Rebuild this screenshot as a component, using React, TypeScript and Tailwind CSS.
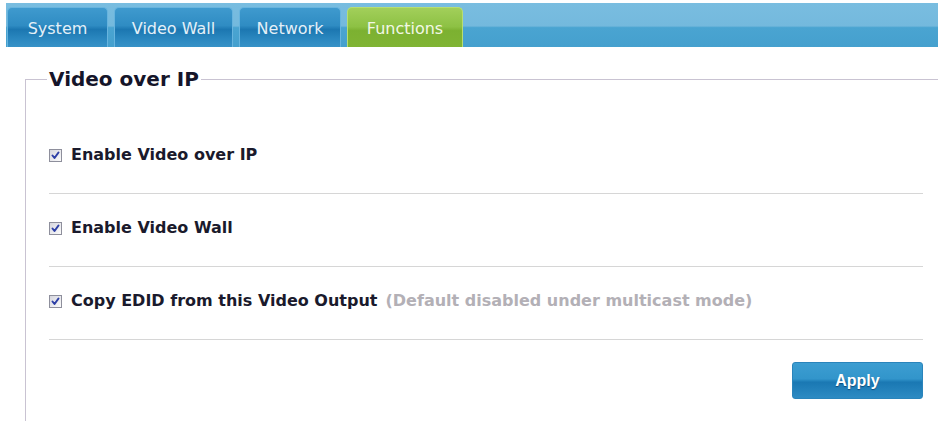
import React, { useState } from 'react';

const tabs = ['System', 'Video Wall', 'Network', 'Functions'];
const tabWidths: Record<string, string> = {
    'System': 'w-[101px]',
    'Video Wall': 'w-[119px]',
    'Network': 'w-[102px]',
    'Functions': 'w-[116px]',
};

const CheckBox: React.FC<{ checked: boolean; onToggle: () => void }> = ({ checked, onToggle }) => (
    <span onClick={onToggle}
        className="flex h-[13px] w-[13px] shrink-0 cursor-pointer items-center justify-center border border-[#8e8f9c] bg-gradient-to-br from-[#d6d6de] to-[#fbfbfb]">
        {checked && (
            <svg width="9" height="9" viewBox="0 0 9 9">
                <path d="M1.5 4.5 L3.5 7 L7.5 1.5" fill="none" stroke="#2d3fa6" strokeWidth="2" strokeLinecap="round" strokeLinejoin="round" />
            </svg>
        )}
    </span>
);

const App: React.FC = () => {
    const [active, setActive] = useState('Functions');
    const [opts, setOpts] = useState({ vip: true, wall: true, edid: true });

    const toggle = (key: keyof typeof opts) => setOpts({ ...opts, [key]: !opts[key] });

    const rows: { key: keyof typeof opts; label: string; note?: string }[] = [
        { key: 'vip', label: 'Enable Video over IP' },
        { key: 'wall', label: 'Enable Video Wall' },
        { key: 'edid', label: 'Copy EDID from this Video Output', note: '(Default disabled under multicast mode)' },
    ];

    return (
        <div className="min-h-[421px] w-full overflow-hidden bg-white pt-[3px] font-['DejaVu_Sans',Verdana,sans-serif]">
            {/* tab strip */}
            <div className="ml-[6px] flex h-[44px] items-end gap-[6px] bg-[linear-gradient(to_bottom,#79bde0_0%,#74b9dd_52%,#4aa4d1_56%,#45a0ce_100%)] pl-[1px]">
                {tabs.map(tab => {
                    const on = tab === active;
                    return (
                        <button key={tab} onClick={() => setActive(tab)}
                            className={`flex h-[40px] items-center justify-center rounded-t-[5px] border border-b-0 pt-[2px] text-[16px] ${tabWidths[tab]} ${on
                                ? 'border-[#b7de72] bg-[linear-gradient(to_bottom,#a2cf5a_0%,#8dc144_48%,#7cb131_58%,#80b434_100%)] text-[#f2f8e6]'
                                : 'border-[#67b4de] bg-[linear-gradient(to_bottom,#3f9ace_0%,#2f8cc3_45%,#1c77b1_55%,#2b88c0_80%,#3792c7_100%)] text-[#e4f0f8]'}`}>
                            {tab}
                        </button>
                    );
                })}
            </div>

            <fieldset className="mt-[20px] ml-[25px] -mr-[20px] border-l border-t border-[#c9c3d2] pl-[23px] pr-[35px]">
                <legend className="-ml-[2px] px-[2px] text-[20px] leading-[24px] font-bold text-[#15152a]">Video over IP</legend>
                <div className="pt-[30px]">
                    {rows.map(row => (
                        <div key={row.key} className="flex items-center border-b border-[#d6d6d6] pt-[24px] pb-[28px] leading-[20px]">
                            <CheckBox checked={opts[row.key]} onToggle={() => toggle(row.key)} />
                            <span className="ml-[9px] text-[16px] font-bold text-[#1a1a2c]">{row.label}</span>
                            {row.note && <span className="ml-[8px] text-[16px] font-bold text-[#b3b0b6]">{row.note}</span>}
                        </div>
                    ))}
                    <div className="flex justify-end pt-[22px] pb-[22px]">
                        <button className="h-[37px] w-[131px] rounded-[3px] border border-[#2a84bb] bg-[linear-gradient(to_bottom,#3c9dd1_0%,#3295cb_45%,#1a78b3_55%,#2d8bc3_100%)] font-['Liberation_Sans',Arial,sans-serif] text-[16px] font-bold text-white [text-shadow:0_1px_1px_rgba(0,40,80,0.6)]">
                            Apply
                        </button>
                    </div>
                </div>
            </fieldset>
        </div>
    );
};

export default App;
